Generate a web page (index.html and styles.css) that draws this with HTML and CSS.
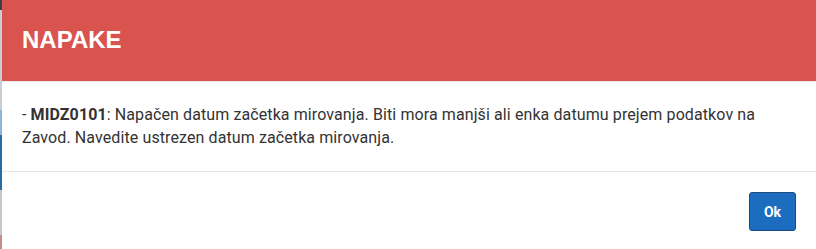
FILE: index.html
```html
<!DOCTYPE html>
<html lang="sl">
<head>
  <meta charset="UTF-8">
  <meta name="viewport" content="width=device-width, initial-scale=1.0">
  <title>Napake</title>
  <link rel="stylesheet" href="styles.css">
</head>
<body>
  <div class="backdrop">
    <div class="backdrop-edge"></div>

    <!-- Error dialog -->
    <div class="modal">
      <div class="modal-header">
        <h1>NAPAKE</h1>
      </div>
      <div class="modal-body">
        <p>- <b>MIDZ0101</b>: Napačen datum začetka mirovanja. Biti mora manjši ali enka datumu prejem podatkov na Zavod. Navedite ustrezen datum začetka mirovanja.</p>
      </div>
      <div class="modal-footer">
        <button class="btn-ok">Ok</button>
      </div>
    </div>
  </div>
</body>
</html>
```

FILE: styles.css
```css
html, body {
  margin: 0;
  padding: 0;
  height: 100%;
}
body {
  font-family: Roboto, "Liberation Sans", Arial, sans-serif;
  background-color: #fff;
}
.backdrop {
  display: flex;
  height: 100%;
}
.backdrop-edge {
  width: 2px;
  flex-shrink: 0;
  background: linear-gradient(to bottom,
    #39404c 0, #39404c 10px,
    #c9cdd3 10px, #c9cdd3 110px,
    #8fb6d6 110px, #8fb6d6 135px,
    #2a6aa6 135px, #2a6aa6 190px,
    #c4c7cc 190px, #c4c7cc 235px,
    #c98a88 235px, #c98a88 100%);
}
.modal {
  flex: 1;
  background-color: #fff;
}
.modal-header {
  background-color: #d9534f;
  height: 53px;
  padding: 28px 20px 0;
  border-bottom: 1px solid #eee;
}
.modal-header h1 {
  margin: 0;
  font-family: "Liberation Sans", Arial, sans-serif;
  font-size: 24px;
  line-height: 24px;
  font-weight: bold;
  color: #fff;
}
.modal-body {
  padding: 21px 20px 22px;
  border-bottom: 1px solid #e5e5e5;
}
.modal-body p {
  margin: 0;
  font-size: 16px;
  line-height: 23px;
  letter-spacing: 0.1px;
  color: #333;
}
.modal-footer {
  display: flex;
  justify-content: flex-end;
  padding: 20px 20px 0;
}
.btn-ok {
  width: 47px;
  height: 39px;
  background-color: #1c6dbf;
  border: 1px solid #1a4a7e;
  border-radius: 3px;
  color: #fff;
  font-family: Roboto, "Liberation Sans", Arial, sans-serif;
  font-size: 14px;
  font-weight: bold;
  cursor: pointer;
}
```
